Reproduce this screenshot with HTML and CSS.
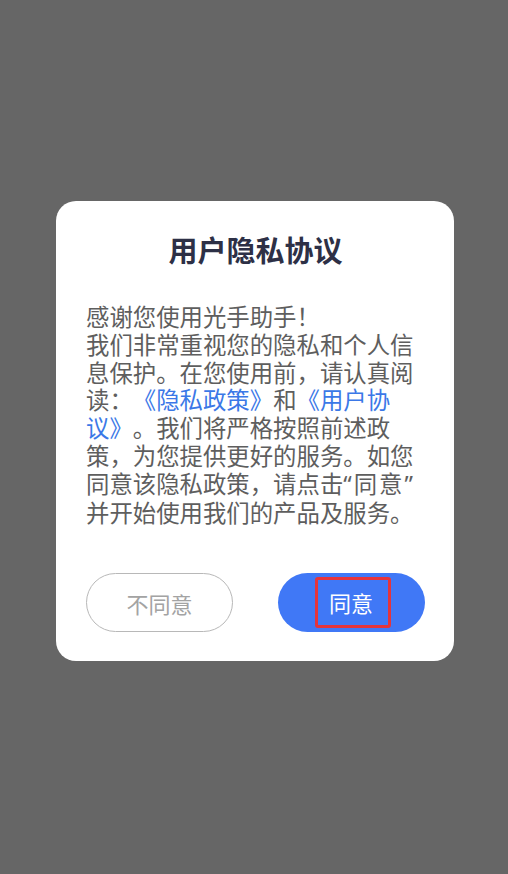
FILE: index.html
```html
<!DOCTYPE html>
<html lang="zh-CN">
<head>
<meta charset="utf-8">
<title>用户隐私协议</title>
<link rel="stylesheet" href="styles.css">
</head>
<body>
<div class="screen">
  <div class="dialog">
    <h1 class="dialog-title">用户隐私协议</h1>
    <p class="dialog-text">感谢您使用光手助手！<br>我们非常重视您的隐私和个人信息保护。在您使用前，请认真阅读：<a class="link">《隐私政策》</a>和<a class="link">《用户协议》</a>。我们将严格按照前述政策，为您提供更好的服务。如您同意该隐私政策，请点击<span class="quote">“同意”</span>并开始使用我们的产品及服务。</p>
    <div class="dialog-actions">
      <button class="btn btn-outline">不同意</button>
      <button class="btn btn-primary"><span class="btn-label-marked">同意</span></button>
    </div>
  </div>
</div>
</body>
</html>
```

FILE: styles.css
```css
html, body {
  margin: 0;
  padding: 0;
  background: #666666;
}

.screen {
  width: 508px;
  height: 874px;
  padding-top: 201px;
  box-sizing: border-box;
  font-family: "Noto Sans CJK SC", "Noto Sans", sans-serif;
}

.dialog {
  width: 398px;
  margin-left: 56px;
  background: #ffffff;
  border-radius: 20px;
  padding: 29px 29px 29px 30px;
  box-sizing: border-box;
}

.dialog-title {
  margin: 0;
  text-align: center;
  font-size: 29px;
  line-height: 38px;
  font-weight: 700;
  color: #2d3046;
}

.dialog-text {
  margin: 35px 0 0 0;
  font-size: 23.4px;
  line-height: 27.8px;
  color: #5e5e5e;
  text-spacing-trim: space-all;
}

.quote {
  font-family: "Noto Sans", "Noto Sans CJK SC", sans-serif;
  letter-spacing: 2px;
}

.link {
  color: #3b78e7;
  text-decoration: none;
}

.dialog-actions {
  display: flex;
  justify-content: space-between;
  margin-top: 47px;
}

.btn {
  width: 147px;
  height: 59px;
  border-radius: 30px;
  font-family: "Noto Sans CJK SC", sans-serif;
  font-size: 22px;
  padding: 0;
  display: flex;
  align-items: center;
  justify-content: center;
  box-sizing: border-box;
}

.btn-outline {
  background: #ffffff;
  border: 1.5px solid #b8b8b8;
  color: #a3a3a3;
}

.btn-primary {
  background: #4078f6;
  border: none;
  color: #ffffff;
}

.btn-label-marked {
  display: inline-block;
  border: 3px solid #e5343b;
  border-radius: 3px;
  padding: 0 15px 0 11px;
  line-height: 45px;
  margin-left: 3px;
}
```
